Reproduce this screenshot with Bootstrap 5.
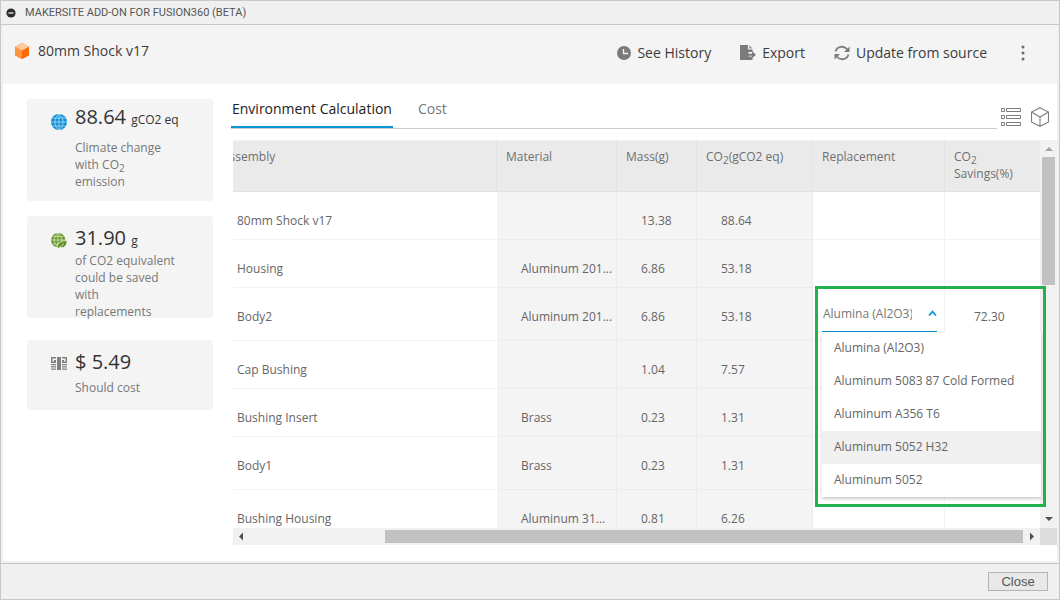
<!DOCTYPE html>
<html lang="en">
<head>
<meta charset="utf-8">
<meta name="viewport" content="width=device-width, initial-scale=1">
<title>Makersite Add-On for Fusion360 (Beta)</title>
<link href="https://cdn.jsdelivr.net/npm/bootstrap@5.3.0/dist/css/bootstrap.min.css" rel="stylesheet">
<style>
  body { font: 12px/17px "Open Sans", "Noto Sans", sans-serif; color: #666; background: #f0f0f0; }
  svg { display: block; flex: none; }
  .shell { border: 1px solid #c8c8c8; min-height: 600px; }
  .titlebar { height: 24px; border-bottom: 1px solid #c8c8c8; font: 11px/22px Roboto, sans-serif; color: #555; }
  .inset { padding: 0 2px; }
  .appbar { height: 59px; padding: 16px 31px 0 11px; background: #f4f4f4; font-size: 14px; line-height: 20px; color: #3c3c3c; }
  .appbar h1 { font: inherit; }
  .tool { border: 0; background: none; padding: 0; color: inherit; }
  .actions { gap: 29px; padding-top: 2px; }
  .actions .tool { gap: 6px; }
  .pane { background: #fff; height: 477px; padding-top: 15px; }

  .side { width: 186px; }
  .metric { background: #f4f4f4; border-radius: 3px; height: 102px; margin-bottom: 15px; padding: 11px 8px 0 24px; }
  .metric.climate { padding-top: 7px; }
  .metric.cost { height: 70px; margin-top: 7px; }
  .metric svg { margin-top: 6px; }
  .metric.climate svg { margin-top: 8px; }
  .metric .figure { font-size: 20px; line-height: 22px; color: #333; }
  .metric .unit { font-size: 12px; }
  .metric p { width: 102px; color: #777; }
  .metric.cost p { padding-top: 6px; }
  sub { font-size: 10px; line-height: 0; }

  .main-col { margin-left: 18px; }
  .tabs { border-bottom: 1px solid #ccc; font-size: 14px; line-height: 20px; }
  .tabs button { border: 0; background: none; color: #777; padding: 0 1px 7px; border-bottom: 2px solid transparent; }
  .tabs .active { color: #222; border-color: #0696d7; }
  .views { gap: 9px; padding: 0 7px 2px 4px; }

  .gridbox { margin: 11px 0 0 2px; }
  .viewport { height: 388px; overflow: hidden; }
  .parts { width: calc(100% + 20px); flex: none; table-layout: fixed; border-collapse: separate; border-spacing: 0; }
  .parts th, .parts td { height: 48px; padding: 20px 4px 0 24px; vertical-align: top; border-right: 1px solid #ececec; border-bottom: 1px solid #ececec; background: #f4f4f4; font-weight: 400; }
  .parts thead th { height: 52px; padding: 7px 8px 0 9px; background: #eaeaea; border-color: #e2e2e2; border-top: 1px solid #f1f1f1; color: #707070; }
  .parts .tall > * { height: 53px; }
  .parts tbody th, .parts .open { background: #fff; border-color: #f3f3f3; }
  .parts tbody th { border-right-color: #fff; }
  .parts td { white-space: nowrap; }
  .parts td:nth-child(6), .parts th:nth-child(6) { border-right: 0; }
  .parts td:nth-child(6) { padding-left: 29px; }

  .frame { position: absolute; top: 146px; right: 11px; width: 231px; height: 221px; border: 3px solid #22b14c; padding: 16px 2px 0 4px; }
  .combo { width: 115px; height: 27px; border-bottom: 1px solid #0689c7; background: #fff; }
  .combo input { width: 90px; border: 0; padding: 0 0 0 1px; outline: 0; color: #777; background: none; }
  .options { box-shadow: 0 2px 3px #00000033; background: #fff; }
  .options li { height: 33px; padding: 7px 12px; }
  .options .hover { background: #f0f0f0; }

  .vbar { width: 17px; background: #f1f1f1; }
  .hbar { height: 17px; background: #f1f1f1; }
  .corner { background: #dcdcdc; }
  .thumb { background: #c1c1c1; }
  .vbar .thumb { width: 13px; }
  .hbar .thumb { height: 13px; }
  .footer { border-top: 1px solid #c8c8c8; margin-top: 2px; height: 36px; padding-right: 11px; }
  .close-dialog { width: 60px; height: 19px; border: 1px solid #b4b4b4; background: #e8e8e8; color: #555; font: 13px/16px "Liberation Sans", Arial, sans-serif; padding: 0; }
</style>
</head>
<body>
<div class="shell d-flex flex-column">
  <header class="titlebar d-flex align-items-center">
    <svg class="ms-1" width="12" height="12" viewBox="0 0 12 12"><circle cx="6" cy="6" r="4.6" fill="#2d2d2d"/><path d="M3.500 6h5" stroke="#fff" stroke-width="1.200"/></svg>
    <span class="ms-2">MAKERSITE ADD-ON FOR FUSION360 (BETA)</span>
  </header>

  <div class="inset flex-grow-1 d-flex flex-column">
    <div class="appbar d-flex align-items-start justify-content-between">
      <div class="d-flex align-items-center gap-2">
        <svg width="16" height="16" viewBox="0 0 16 16"><path d="M8 0l7 3.700v8.600L8 16 1 12.300V3.700z" fill="#ff7a1c"/><path d="M8 0l7 3.700-7 4-7-4z" fill="#ffc9a0"/><path d="M1 3.700l7 4V16l-7-3.700z" fill="#ff9440"/><path d="M15 3.700l-7 4V16l7-3.700z" fill="#fb6a05"/></svg>
        <h1 class="m-0">80mm Shock v17</h1>
      </div>
      <div class="actions d-flex align-items-center">
        <button type="button" class="tool d-flex align-items-center">
          <svg width="14" height="14" viewBox="0 0 14 14"><circle cx="7" cy="7" r="7" fill="#7b7b7b"/><path d="M6.500 3v4.500H11" fill="none" stroke="#f4f4f4" stroke-width="1.300"/></svg>See History</button>
        <button type="button" class="tool d-flex align-items-center">
          <svg width="16" height="16" viewBox="0 0 16 16"><path d="M0 0h8v4.500h4.500V7H8.500v4.500h4V15H0z" fill="#7b7b7b"/><path d="M9.200 .3l3.300 3.200H9.200z" fill="#999"/><path d="M7.500 8.700h4.500V6l4 3.700-4 3.600v-2.500H7.500z" fill="#7b7b7b"/></svg>Export</button>
        <button type="button" class="tool d-flex align-items-center">
          <svg width="16" height="16" viewBox="0 0 16 16" fill="none" stroke="#7b7b7b" stroke-width="1.800"><path d="M1.500 6.500A6.600 6.600 0 0 1 13 4.300M14.500 9.500A6.600 6.600 0 0 1 3 11.700"/><path d="M15.500 1.500V7H10zM.5 14.500V9H6z" fill="#7b7b7b" stroke="none"/></svg>Update from source</button>
        <button type="button" class="tool ps-1" aria-label="More">
          <svg width="6" height="16" viewBox="0 0 6 16" fill="#6e6e6e"><circle cx="3" cy="2" r="1.500"/><circle cx="3" cy="8" r="1.500"/><circle cx="3" cy="14" r="1.500"/></svg></button>
      </div>
    </div>

    <main class="pane d-flex ps-4">
      <aside class="side flex-shrink-0 d-flex flex-column">
        <section class="metric climate d-flex gap-2">
          <svg width="16" height="16" viewBox="0 0 16 16"><circle cx="8" cy="8" r="8" fill="#1390d6"/><path d="M8 0v16M0 8h16M1.500 4h13M1.500 12h13M8 0C2.500 4 2.500 12 8 16M8 0c5.500 4 5.500 12 0 16" fill="none" stroke="#a9dcf8" stroke-width=".8"/></svg>
          <div><div class="figure">88.64 <span class="unit">gCO2 eq</span></div>
          <p class="m-0 mt-2 pe-2">Climate change with CO<sub>2</sub> emission</p></div>
        </section>
        <section class="metric d-flex gap-2">
          <svg width="16" height="16" viewBox="0 0 16 16"><circle cx="7.200" cy="7.200" r="7.200" fill="#6a9a28"/><path d="M7 0v14M0 7h14M1.500 3.500h11M1.500 11h11M7 0C2 4 2 10 7 14M7 0c5 4 5 10 0 14" fill="none" stroke="#d3e3ba" stroke-width=".8"/><path d="M6.500 16c-1-5 2-8 9.500-8.500 0 5-2.500 8-7.500 7z" fill="#5c8f1d" stroke="#f4f4f4" stroke-width=".8"/><path d="M7.500 15.500L13 10.500" stroke="#f4f4f4" stroke-width=".8"/></svg>
          <div><div class="figure">31.90 <span class="unit">g</span></div>
          <p class="m-0">of CO2 equivalent could be saved with replacements</p></div>
        </section>
        <section class="metric cost d-flex gap-2">
          <svg width="16" height="13" viewBox="0 0 16 13" fill="#808080"><path d="M0 0h5v1.500H1.500v3H3V3h2v3H0zM16 0h-5v1.500h3.500v3H13V3h-2v3h5zM6 0h4v13H6zM0 7h5v1.200H0zM0 9.300h5v1.200H0zM0 11.600h5v1.200H0zM11 7h5v1.200h-5zM11 9.300h5v1.200h-5zM11 11.600h5v1.200h-5z"/></svg>
          <div><div class="figure">$ 5.49</div>
          <p class="m-0">Should cost</p></div>
        </section>
      </aside>

      <div class="main-col flex-grow-1 d-flex flex-column">
        <div class="d-flex align-items-end">
          <div class="tabs d-flex gap-4 flex-grow-1" role="tablist">
            <button type="button" role="tab" aria-selected="true" class="active">Environment Calculation</button>
            <button type="button" role="tab" aria-selected="false">Cost</button>
          </div>
          <div class="views d-flex">
            <button type="button" class="tool" aria-label="List view"><svg width="20" height="20" viewBox="0 0 20 20" fill="none" stroke="#7d7d7d"><path d="M.5 1.500h3v3h-3zM5.500 1.500h14v3h-14zM.5 8.500h3v3h-3zM5.500 8.500h14v3h-14zM.5 15.500h3v3h-3zM5.500 15.500h14v3h-14z"/></svg></button>
            <button type="button" class="tool" aria-label="Model view"><svg width="20" height="20" viewBox="0 0 20 20" fill="none" stroke="#7d7d7d" stroke-width="1.100"><path d="M10 .7l8.500 4.400v9.800L10 19.300l-8.500-4.400V5.100zM1.500 5.100L10 10l8.500-4.900M10 10v9.300"/></svg></button>
          </div>
        </div>

        <div class="gridbox position-relative">
          <div class="d-flex">
            <div class="viewport flex-grow-1 d-flex justify-content-end">
              <table class="parts">
                <colgroup><col><col width="120"><col width="80"><col width="116"><col width="132"><col width="95"></colgroup>
                <thead><tr><th>Assembly</th><th>Material</th><th>Mass(g)</th><th>CO<sub>2</sub>(gCO2 eq)</th><th>Replacement</th><th>CO<sub>2</sub> Savings(%)</th></tr></thead>
                <tbody>
                  <tr><th scope="row">80mm Shock v17</th><td></td><td>13.38</td><td>88.64</td><td class="open"></td><td class="open"></td></tr>
                  <tr><th scope="row">Housing</th><td>Aluminum 201...</td><td>6.86</td><td>53.18</td><td class="open"></td><td class="open"></td></tr>
                  <tr class="tall"><th scope="row">Body2</th><td>Aluminum 201...</td><td>6.86</td><td>53.18</td><td class="open"></td><td class="open">72.30</td></tr>
                  <tr><th scope="row">Cap Bushing</th><td></td><td>1.04</td><td>7.57</td><td class="open"></td><td class="open"></td></tr>
                  <tr><th scope="row">Bushing Insert</th><td>Brass</td><td>0.23</td><td>1.31</td><td class="open"></td><td class="open"></td></tr>
                  <tr class="tall"><th scope="row">Body1</th><td>Brass</td><td>0.23</td><td>1.31</td><td class="open"></td><td class="open"></td></tr>
                  <tr><th scope="row">Bushing Housing</th><td>Aluminum 31...</td><td>0.81</td><td>6.26</td><td class="open"></td><td class="open"></td></tr>
                </tbody>
              </table>
            </div>
            <div class="vbar d-flex flex-column align-items-center">
              <svg width="17" height="17" viewBox="0 0 17 17"><path d="M5 11h8L9 7z" fill="#a3a3a3"/></svg>
              <div class="thumb" style="height:33%"></div>
              <svg class="mt-auto" width="17" height="17" viewBox="0 0 17 17"><path d="M5 6h8l-4 4z" fill="#505050"/></svg>
            </div>
          </div>
          <div class="d-flex">
            <div class="hbar flex-grow-1 d-flex align-items-center">
              <svg width="17" height="17" viewBox="0 0 17 17"><path d="M10 4.500v8l-4-4z" fill="#505050"/></svg>
              <div class="flex-grow-1 d-flex justify-content-end"><div class="thumb" style="width:82.6%"></div></div>
              <svg width="17" height="17" viewBox="0 0 17 17"><path d="M7 4.500v8l4-4z" fill="#505050"/></svg>
            </div>
            <div class="vbar corner"></div>
          </div>

          <div class="frame">
            <div class="combo d-flex align-items-start">
              <input type="text" role="combobox" aria-expanded="true" aria-controls="materials" aria-label="Replacement" value="Alumina (Al2O3)">
              <svg class="ms-auto mt-1" width="9" height="8" viewBox="0 0 9 8"><path d="M1 6.500l3.500-3.800L8 6.500" fill="none" stroke="#0696d7" stroke-width="1.800"/></svg>
            </div>
            <ul id="materials" class="options list-unstyled m-0" role="listbox">
              <li role="option">Alumina (Al2O3)</li>
              <li role="option">Aluminum 5083 87 Cold Formed</li>
              <li role="option">Aluminum A356 T6</li>
              <li role="option" class="hover">Aluminum 5052 H32</li>
              <li role="option">Aluminum 5052</li>
            </ul>
          </div>
        </div>
      </div>
    </main>
  </div>

  <footer class="footer d-flex justify-content-end align-items-center">
    <button type="button" class="close-dialog">Close</button>
  </footer>
</div>
</body>
</html>
